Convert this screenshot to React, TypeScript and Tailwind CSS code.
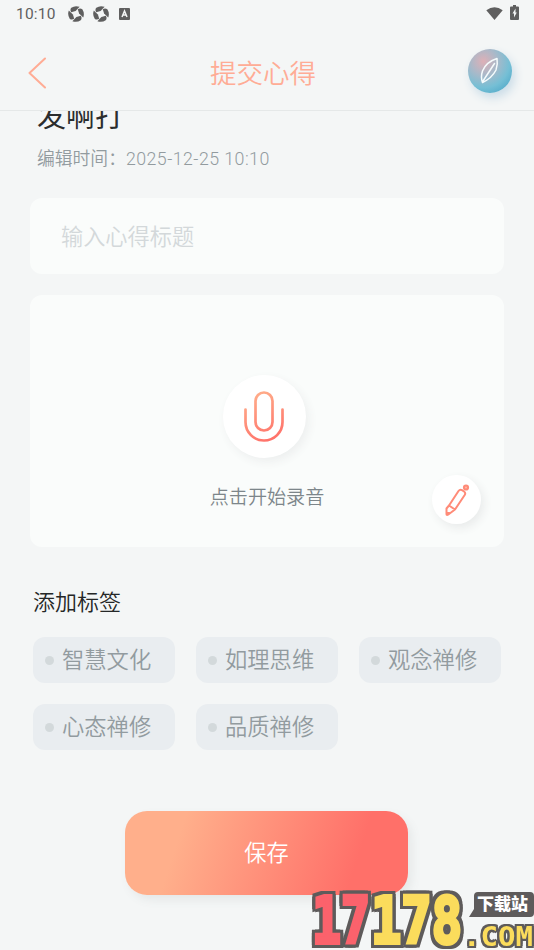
const TAGS = ["智慧文化", "如理思维", "观念禅修", "心态禅修", "品质禅修"];

function StatusBar() {
  return (
    <div className="flex h-7 items-center pl-4 pr-[15px] text-[#5f5f5f]">
      <span className="w-[52px] font-[Roboto] text-[15.500px] leading-7 tracking-[0.2px]">10:10</span>
      <SwirlIcon />
      <span className="w-[9px]" />
      <SwirlIcon />
      <svg className="ml-[10px]" width="11" height="12" viewBox="0 0 11 12">
        <rect width="11" height="12" rx="1" fill="currentColor" />
        <path d="M3 9 5.500 3 8 9M4 7h3" fill="none" stroke="#f4f6f6" strokeWidth="1.500" />
      </svg>
      <svg className="mb-0.5 ml-auto" width="17" height="15" viewBox="0 0 18 15">
        <path d="M.3 4Q9-2.400 17.700 4L9 14.500Z" fill="currentColor" />
      </svg>
      <svg className="mb-[3px] ml-[7px]" width="9" height="15" viewBox="0 0 9 15">
        <path d="M3 0h3v1.500h2q1 0 1 1V14q0 1-1 1H1q-1 0-1-1V2.500q0-1 1-1h2Z" fill="currentColor" />
        <path d="M5.500 3.500 2.500 8.500H4v4L6.800 7.500H5.500Z" fill="#f4f6f6" />
      </svg>
    </div>
  );
}

function SwirlIcon() {
  return (
    <svg width="16" height="16" viewBox="0 0 16 16" fill="currentColor">
      {[0, 90, 180, 270].map((r) => (
        <path key={r} transform={`rotate(${r} 8 8)`} d="M3.300 1.700Q7-.8 11.600.8L7.600 4.900 3.200 6.200Q1.600 3.700 3.300 1.700Z" />
      ))}
    </svg>
  );
}

function Header() {
  return (
    <header className="flex h-[83px] items-center border-b border-[#e5e8e8] pl-7 pt-2 pr-[22px]">
      <svg width="18" height="32" viewBox="0 0 18 32" fill="none">
        <path d="M17 1.500 1.500 16 17 30.500" stroke="#ffac95" strokeWidth="2" strokeLinecap="round" strokeLinejoin="round" />
      </svg>
      <h1 className="ml-[164px] mt-[-3px] text-[26.500px] font-[350] leading-10 text-[#ffac95]">提交心得</h1>
      <span className="mb-1 ml-auto flex size-11 items-center justify-center rounded-full bg-[radial-gradient(circle_at_35%_28%,#deb0b7_0%,#a9b9c9_32%,#75bfd5_62%,#3d9dc2_100%)] shadow-[3px_5px_10px_#cbdde8]">
        <svg width="44" height="44" viewBox="0 0 44 44" fill="none" stroke="#f5fbfc" strokeWidth="1.500" strokeLinecap="round" strokeLinejoin="round">
          <path d="M29 9.500Q18 13 14.500 22 12.500 28 14.500 33.500 24 29 28 21 30 15 29 9.500ZM26.500 14.500 15 32" />
        </svg>
      </span>
    </header>
  );
}

function Recorder() {
  return (
    <section className="relative mt-[21px] flex h-[252px] flex-col items-center rounded-xl bg-[#fafcfb] pt-20">
      <button className="mr-[6px] flex size-[83px] items-center justify-center rounded-full bg-white shadow-[3px_4px_10px_#edefef]">
        <svg width="42" height="52" viewBox="0 0 42 52" fill="none" stroke="url(#mic)" strokeWidth="2.700" strokeLinecap="round">
          <defs>
            <linearGradient id="mic" x1="8" y1="2" x2="30" y2="50" gradientUnits="userSpaceOnUse">
              <stop stopColor="#ffaf8b" />
              <stop offset="1" stopColor="#ff7069" />
            </linearGradient>
          </defs>
          <rect x="12.500" y="1.500" width="17" height="38" rx="8.500" />
          <path d="M2.500 18.500v12.500a18.500 18.500 0 0 0 37 0V18.500" />
        </svg>
      </button>
      <p className="mt-[22px] text-[19.100px] font-[350] leading-8 text-[#7d868a]">点击开始录音</p>
      <button className="absolute bottom-[23px] right-[23px] flex size-[49px] items-center justify-center rounded-full bg-white shadow-[3px_4px_10px_#e9ebeb]">
        <svg width="26" height="34" viewBox="0 0 26 34" fill="none" stroke="#ff8b78" strokeWidth="2" strokeLinejoin="round">
          <path d="M5 22.500 14.500 8q1.500-2 3.500-.8l2 1.300q2 1.400.7 3.500L11 26.500ZM5 22.500 2.500 25.500V31q0 1.500 1.500.7L11 26.500M2.500 28.500l3 2" />
          <circle cx="22" cy="4.500" r="2.100" fill="#ffb5a3" />
        </svg>
      </button>
    </section>
  );
}

function Watermark() {
  return (
    <svg className="absolute bottom-0 right-0" width="226" height="62" viewBox="0 0 226 62">
      <g fontFamily="DejaVu Sans Mono" fontWeight="700">
        <g
          fontSize="64"
          strokeWidth="4"
          className="[filter:drop-shadow(3px_0_0_#5e5b5b)_drop-shadow(-3px_0_0_#5e5b5b)_drop-shadow(0_3px_0_#5e5b5b)_drop-shadow(0_-3px_0_#5e5b5b)]"
        >
          <text x="4" y="55" fill="#fb626c" stroke="#fb626c" textLength="58" lengthAdjust="spacingAndGlyphs">17</text>
          <text x="63" y="55" fill="#fbdc5c" stroke="#fbdc5c" textLength="91" lengthAdjust="spacingAndGlyphs">178</text>
        </g>
        <text
          x="155"
          y="58"
          fontSize="27"
          fill="#fbdc5c"
          textLength="70"
          lengthAdjust="spacingAndGlyphs"
          className="[filter:drop-shadow(2px_0_0_#5e5b5b)_drop-shadow(-2px_0_0_#5e5b5b)_drop-shadow(0_2px_0_#5e5b5b)_drop-shadow(0_-2px_0_#5e5b5b)]"
        >
          .COM
        </text>
      </g>
      <path d="M170 4h52q4 0 4 4v17q0 4-4 4h-61l5-8V8q0-4 4-4Z" fill="#5e5b5b" />
      <text x="169" y="22" fontSize="17" fontWeight="900" fill="#fff" fontFamily="Noto Sans CJK SC">下载站</text>
    </svg>
  );
}

export default function App() {
  return (
    <div className="relative h-[950px] w-[534px] overflow-hidden bg-[#f4f6f6] font-['Noto_Sans_CJK_SC',sans-serif]">
      <StatusBar />
      <Header />
      <main className="h-[839px] overflow-hidden px-[30px]">
        <h2 className="-mt-[17px] ml-[7px] text-[29px] leading-10 text-[#2b2d2d]">发啊打</h2>
        <p className="ml-[7px] mt-[9px] text-[17.800px] font-[350] leading-7 text-[#929b9f]">
          编辑时间：<span className="font-[Roboto] font-light tracking-[0.45px]">2025-12-25 10:10</span>
        </p>
        <input
          className="mt-[25px] block h-[76px] w-full rounded-xl bg-[#fafcfb] px-[31px] pb-[3px] text-[22.200px] font-[350] placeholder:text-[#d3d8da]"
          placeholder="输入心得标题"
        />
        <Recorder />
        <h3 className="ml-[3px] mt-[37px] text-[22px] font-[350] leading-8 text-[#252727]">添加标签</h3>
        <div className="ml-[3px] mt-[21px] grid grid-cols-[142px_142px_142px] gap-x-[21px] gap-y-[21px]">
          {TAGS.map((t) => (
            <button key={t} className="flex h-[46px] items-center rounded-xl bg-[#e9edf0] pl-3 text-[22.300px] font-[350] text-[#929b9f]">
              <span className="mr-[8px] size-[9px] rounded-full bg-[#d3d9db]" />
              <span className="-mt-0.5">{t}</span>
            </button>
          ))}
        </div>
        <button className="ml-[95px] mt-[61px] block h-[84px] w-[283px] rounded-[22px] bg-[linear-gradient(108deg,#ffaf8b_20%,#ff7069_80%)] pb-0.5 text-[22.200px] font-[350] text-white shadow-[4px_5px_10px_#e5e8e8]">
          保存
        </button>
      </main>
      <Watermark />
    </div>
  );
}
